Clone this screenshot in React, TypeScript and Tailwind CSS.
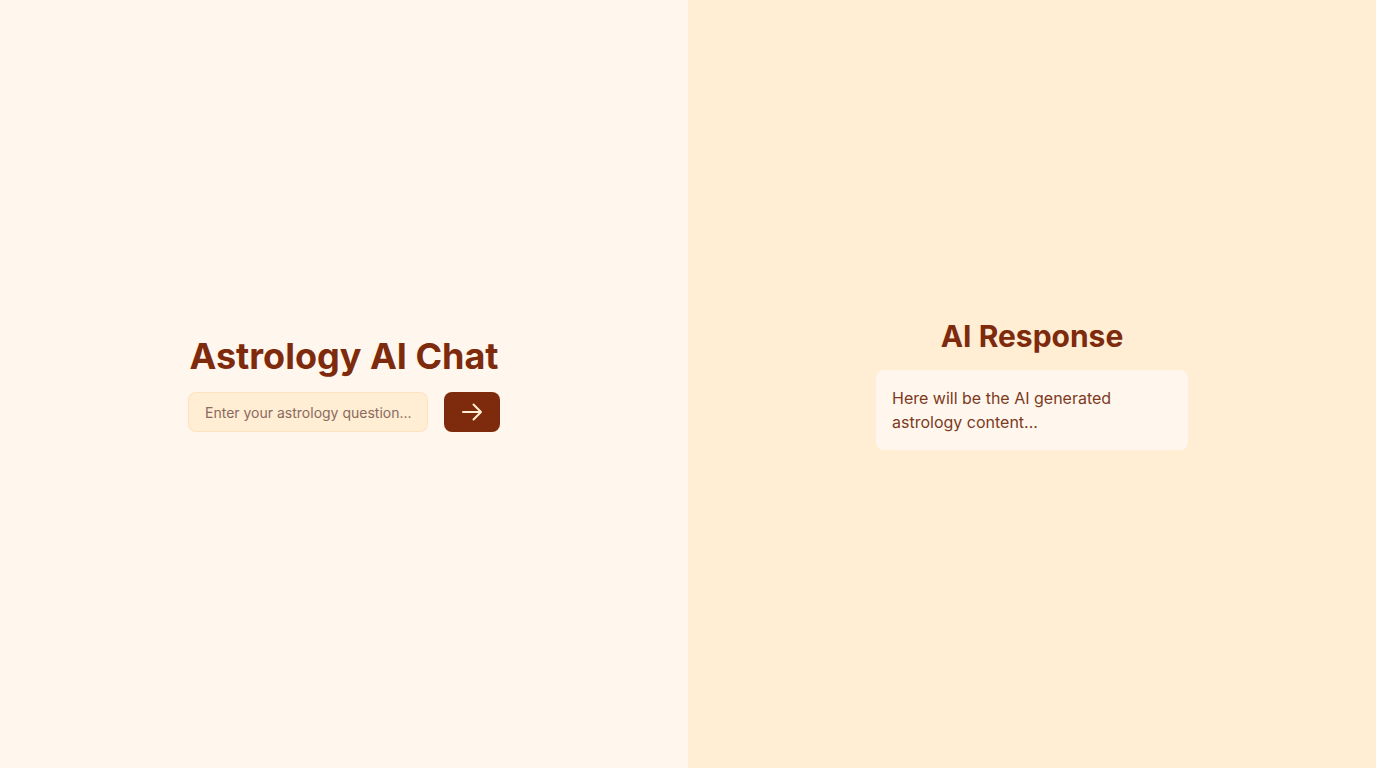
export default function App() {
    return (
        <div className="flex h-screen w-full font-['Inter',sans-serif] text-orange-900">
            {/* Chat side */}
            <section className="flex flex-1 flex-col items-center justify-center bg-orange-50">
                <div className="w-[312px]">
                    <h1 className="mb-4 text-center text-4xl font-bold">Astrology AI Chat</h1>
                    <div className="flex gap-4">
                        <input
                            type="text"
                            placeholder="Enter your astrology question..."
                            className="h-10 w-[240px] rounded-lg border border-orange-200/50 bg-orange-100 px-4 text-sm text-orange-900 placeholder:text-[#8a6a5c] outline-none"
                        />
                        <button className="flex h-10 w-14 items-center justify-center rounded-lg bg-orange-900 text-orange-100">
                            <svg width="24" height="24" viewBox="0 0 24 24" fill="none" stroke="currentColor" strokeWidth={2} strokeLinecap="round" strokeLinejoin="round">
                                <path d="M13.5 4.5 21 12l-7.5 7.5M21 12H3" />
                            </svg>
                        </button>
                    </div>
                </div>
            </section>

            {/* Response side */}
            <section className="flex flex-1 flex-col items-center justify-center bg-orange-100">
                <div className="w-[312px]">
                    <h2 className="mb-4 text-center text-3xl font-bold">AI Response</h2>
                    <div className="rounded-lg bg-orange-50 p-4 text-base leading-6 text-[#7c3a1e]">
                        Here will be the AI generated astrology content...
                    </div>
                </div>
            </section>
        </div>
    )
}
